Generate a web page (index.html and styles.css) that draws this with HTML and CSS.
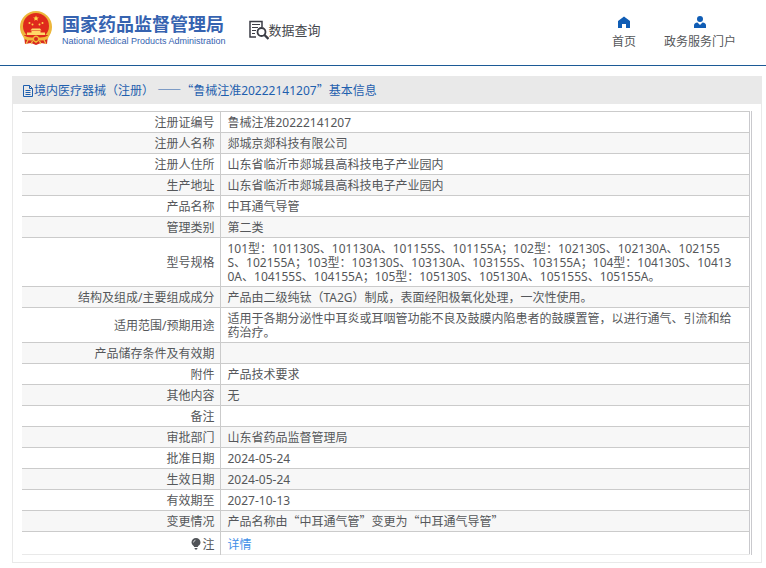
FILE: index.html
```html
<!DOCTYPE html>
<html lang="zh-CN">
<head>
<meta charset="utf-8">
<title>国家药品监督管理局 数据查询</title>
<link rel="stylesheet" href="styles.css">
</head>
<body>
<header class="site-header">
  <a class="brand" href="#">
    <svg class="emblem" viewBox="0 0 32 34" aria-hidden="true">
      <ellipse cx="16" cy="16" rx="16" ry="16" fill="#edb73c"/>
      <path d="M4 24h24l-1 9-6-1-5 2-5-2-6 1z" fill="#d92b1f"/>
      <circle cx="16" cy="15" r="13" fill="#df2a1c"/>
      <path d="M16 4.500l.8 1.900 2.100.1-1.600 1.300.5 2L16 8.700l-1.800 1.100.5-2-1.600-1.300 2.100-.1z" fill="#ffd94a"/>
      <g fill="#ffd24a"><circle cx="9.500" cy="12" r="1"/><circle cx="12.500" cy="13.500" r="1"/><circle cx="19.500" cy="13.500" r="1"/><circle cx="22.500" cy="12" r="1"/></g>
      <path d="M12 17.500h8l1.500 2h-11zM11.500 20h9v1.500h4.500v2.500H7v-2.500h4.500z" fill="#ffd868"/>
      <path d="M3 24q5 3 10 2.500a3.200 3.200 0 0 1 6 0Q24 27 29 24l-1 4q-5 2-8.500 1.500L16 32l-3.500-2.500Q9 30 4 28z" fill="#f0ba3a"/>
      <circle cx="16" cy="28" r="2" fill="#d92b1f"/>
      <path d="M8 29l-2 4M24 29l2 4M12.500 30l-1.500 3M19.500 30l1.500 3" stroke="#f2c24b" stroke-width="1.200"/>
    </svg>
    <span class="brand-text">
      <strong class="brand-name">国家药品监督管理局</strong>
      <span class="brand-en">National Medical Products Administration</span>
    </span>
  </a>
  <a class="query" href="#">
    <svg class="query-icon" viewBox="0 0 20 20" fill="none" stroke="#3b3d45" aria-hidden="true">
      <path d="M7 17H1V1.500h12V7" stroke-width="1.500"/>
      <path d="M3 4.500h8M3 7.500h6M3 10.500h4M3 13.500h3" stroke-width="1.200"/>
      <circle cx="12.500" cy="12" r="4" stroke-width="1.800"/>
      <path d="M15.500 15l4 4" stroke-width="2.400"/>
    </svg>
    <span>数据查询</span>
  </a>
  <nav class="site-nav">
    <a href="#">
      <svg viewBox="0 0 12 12" aria-hidden="true"><path d="M6 .5L12 5v7H8V8H4v4H0V5z" fill="#105db5"/></svg>
      首页
    </a>
    <a href="#">
      <svg viewBox="0 0 12 12" aria-hidden="true"><circle cx="6" cy="3" r="3" fill="#105db5"/><path d="M0 12V9.500Q0 7 3.500 6.600L6 9l2.500-2.400Q12 7 12 9.500V12z" fill="#105db5"/></svg>
      政务服务门户
    </a>
  </nav>
</header>
<main class="panel">
  <h1 class="panel-title">
    <svg class="doc-icon" viewBox="0 0 10 12" fill="none" stroke="#1f5fae" aria-hidden="true"><path d="M.5.500h6l3 3v8h-9zM6.500.500v3h3M2.500 5.500h5M2.500 7.500h5M2.500 9.500h5"/></svg>
    <span>境内医疗器械（注册） <span class="wide">——“</span>鲁械注准20222141207<span class="wide">”</span>基本信息</span>
  </h1>
  <div class="table-frame">
    <table class="info">
      <colgroup><col class="label-col"><col></colgroup>
      <tbody>
        <tr><th scope="row">注册证编号</th><td>鲁械注准20222141207</td></tr>
        <tr><th scope="row">注册人名称</th><td>郯城京郯科技有限公司</td></tr>
        <tr><th scope="row">注册人住所</th><td>山东省临沂市郯城县高科技电子产业园内</td></tr>
        <tr><th scope="row">生产地址</th><td>山东省临沂市郯城县高科技电子产业园内</td></tr>
        <tr><th scope="row">产品名称</th><td>中耳通气导管</td></tr>
        <tr><th scope="row">管理类别</th><td>第二类</td></tr>
        <tr><th scope="row">型号规格</th><td>101型：101130S、101130A、101155S、101155A；102型：102130S、102130A、102155<br>S、102155A；103型：103130S、103130A、103155S、103155A；104型：104130S、10413<br>0A、104155S、104155A；105型：105130S、105130A、105155S、105155A。</td></tr>
        <tr><th scope="row">结构及组成/主要组成成分</th><td>产品由二级纯钛（TA2G）制成，表面经阳极氧化处理，一次性使用。</td></tr>
        <tr><th scope="row">适用范围/预期用途</th><td>适用于各期分泌性中耳炎或耳咽管功能不良及鼓膜内陷患者的鼓膜置管，以进行通气、引流和给<br>药治疗。</td></tr>
        <tr><th scope="row">产品储存条件及有效期</th><td></td></tr>
        <tr><th scope="row">附件</th><td>产品技术要求</td></tr>
        <tr><th scope="row">其他内容</th><td>无</td></tr>
        <tr><th scope="row">备注</th><td></td></tr>
        <tr><th scope="row">审批部门</th><td>山东省药品监督管理局</td></tr>
        <tr><th scope="row">批准日期</th><td>2024-05-24</td></tr>
        <tr><th scope="row">生效日期</th><td>2024-05-24</td></tr>
        <tr><th scope="row">有效期至</th><td>2027-10-13</td></tr>
        <tr><th scope="row">变更情况</th><td>产品名称由<span class="wide">“</span>中耳通气管<span class="wide">”</span>变更为<span class="wide">“</span>中耳通气导管<span class="wide">”</span></td></tr>
        <tr class="note"><th scope="row"><svg class="bulb" viewBox="0 0 10 12" aria-hidden="true"><path d="M5 0a4.500 4.500 0 0 1 4.500 4.500C9.500 7 7 7.500 6.800 9H3.200C3 7.500.5 7 .5 4.500A4.500 4.500 0 0 1 5 0zM3.500 10h3l-.5 1.500H4z" fill="#505358"/><path d="M2.500 4.500Q2.700 2.500 4.500 2.200" fill="none" stroke="#fff" stroke-width=".7"/></svg>注</th><td><a href="#">详情</a></td></tr>
      </tbody>
    </table>
  </div>
</main>
</body>
</html>
```
FILE: styles.css
```css
* { box-sizing: border-box; }

body {
  margin: 0;
  background: #fff;
  color: #55575a;
  font: 12px/14px "Noto Sans", "Noto Sans CJK SC", sans-serif;
}

a { color: inherit; text-decoration: none; }
svg { display: block; }

.site-header {
  display: flex;
  align-items: flex-start;
  height: 66px;
  padding: 0 30px 0 20px;
  border-bottom: 1px solid #1c5a96;
}

.brand { display: flex; gap: 10px; padding-top: 11px; color: #3663b0; }
.emblem { width: 32px; height: 34px; }
.brand-text { display: flex; flex-direction: column; padding-top: 3px; }
.brand-name { font-size: 18px; line-height: 20px; font-weight: 700; }
.brand-en {
  padding-top: 1px;
  font-family: "Liberation Sans", sans-serif;
  font-size: 9px;
  line-height: 12px;
  white-space: nowrap;
}

.query {
  display: flex;
  align-items: center;
  margin-left: 23px;
  padding-top: 20px;
  color: #45474c;
  font-size: 13px;
  line-height: 18px;
}
.query-icon { width: 20px; height: 20px; }

.site-nav { display: flex; gap: 28px; margin-left: auto; padding-top: 16px; }
.site-nav a { display: flex; flex-direction: column; align-items: center; gap: 7px; }
.site-nav svg { width: 12px; height: 12px; }

.panel {
  margin: 10px 4px 5px 12px;
  border: 1px solid #e9e9e9;
  border-top: 0;
}

.panel-title {
  display: flex;
  align-items: center;
  gap: 1px;
  margin: 0;
  padding: 8px 10px 6px;
  background: #e9e9e9;
  color: #1f5fae;
  font-size: 12px;
  line-height: 14px;
  font-weight: 400;
}
.doc-icon { width: 10px; height: 12px; }
.wide { font-family: "Noto Sans CJK SC", sans-serif; line-height: 0; }

.table-frame {
  margin: 7px 9px 7px 9px;
  padding-right: 1px;
  border-right: 1px solid #c9c9cd;
}

.info {
  width: 100%;
  border-collapse: collapse;
  table-layout: fixed;
  border-right: 1px solid #c9c9cd;
}
.label-col { width: 198px; }
.info tr { border-top: 1px solid #cbcbcb; }
.info tr:nth-child(even) { background: #f7f7f7; }
.info th, .info td { height: 21px; padding: 4px 5px 2px 7px; font-weight: 400; }
.info th { text-align: right; border-right: 1px solid #cbcbcb; }
.info td { text-align: left; }
.info .note { border-bottom: 1px solid #e9e9e9; }
.info .note th, .info .note td { height: 23px; padding-top: 6px; }
.note a { color: #3f8fe8; }
.bulb { display: inline-block; width: 10px; height: 12px; margin-right: 1px; vertical-align: -1px; }
```
